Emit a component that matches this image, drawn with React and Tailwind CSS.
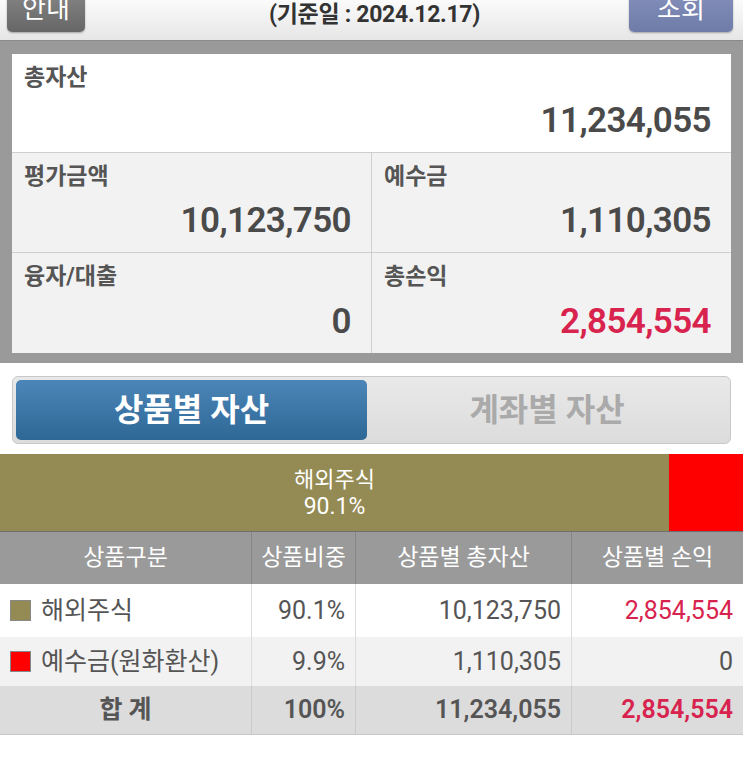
import React from "react";

const font = { fontFamily: "Roboto, 'Noto Sans CJK KR', sans-serif" };

function Cell({ label, value, red, className = "" }) {
  return (
    <div className={`flex flex-col px-[12px] pt-[9px] pb-[11px] ${className}`}>
      <div className="text-[23px] font-bold leading-[30px] text-[#555]">{label}</div>
      <div
        className={`mt-auto text-right text-[35px] font-semibold leading-[40px] tracking-[-0.6px] pr-[8px] ${
          red ? "text-[#d8234e]" : "text-[#4a4a4a]"
        }`}
      >
        {value}
      </div>
    </div>
  );
}

const rows = [
  { name: "해외주식", color: "bg-[#948a54]", ratio: "90.1%", total: "10,123,750", pl: "2,854,554", red: true, bg: "bg-white", h: "h-[53px]" },
  { name: "예수금(원화환산)", color: "bg-[#ff0000]", ratio: "9.9%", total: "1,110,305", pl: "0", red: false, bg: "bg-[#f2f2f2]", h: "h-[49px]" },
];

export default function App() {
  return (
    <div style={font} className="w-[743px] h-[773px] bg-white overflow-hidden">
      {/* top bar */}
      <div className="h-[40px] overflow-hidden bg-gradient-to-b from-[#fbfbfb] to-[#e6e6e6] grid grid-cols-[1fr_auto_1fr] items-start pl-[7px] pr-[10px]">
        <div className="justify-self-start -mt-[14px] h-[46px] w-[78px] rounded-[5px] bg-gradient-to-b from-[#8a8a8a] to-[#666] shadow-[0_1px_2px_rgba(0,0,0,0.3)] flex items-center justify-center text-white text-[26px] leading-none">
          안내
        </div>
        <div className="pt-[1px] pl-[9px] text-[23px] font-bold text-[#333] leading-[28px] tracking-[-0.3px]">(기준일 : 2024.12.17)</div>
        <div className="justify-self-end -mt-[14px] h-[46px] w-[104px] rounded-[5px] bg-gradient-to-b from-[#8793bd] to-[#6f7ca8] shadow-[0_1px_2px_rgba(0,0,0,0.3)] flex items-center justify-center text-white text-[26px] leading-none">
          조회
        </div>
      </div>

      {/* summary frame */}
      <div className="bg-[#9a9a9a] pt-[13px] pb-[10px] px-[12px] border-t border-[#8a8a8a]">
        <div className="bg-white">
          <Cell label="총자산" value="11,234,055" className="h-[99px] border-b border-[#cfcfcf]" />
          <div className="grid grid-cols-[360px_1fr] bg-[#f2f2f2]">
            <Cell label="평가금액" value="10,123,750" className="h-[100px] border-r border-b border-[#cfcfcf]" />
            <Cell label="예수금" value="1,110,305" className="h-[100px] border-b border-[#cfcfcf]" />
            <Cell label="융자/대출" value="0" className="h-[100px] border-r border-[#cfcfcf]" />
            <Cell label="총손익" value="2,854,554" red className="h-[100px]" />
          </div>
        </div>
      </div>

      {/* tabs */}
      <div className="px-[12px] pt-[13px] pb-[10px]">
        <div className="h-[68px] rounded-[6px] border border-[#c8c8c8] bg-gradient-to-b from-[#e9e9e9] to-[#dcdcdc] p-[3px] flex">
          <div className="w-[351px] rounded-[5px] bg-gradient-to-b from-[#4c86b8] to-[#2e6896] flex items-center justify-center text-white text-[32px] font-semibold">
            상품별 자산
          </div>
          <div className="flex-1 flex items-center justify-center text-[#aaa] text-[32px] font-semibold">
            계좌별 자산
          </div>
        </div>
      </div>

      {/* ratio bar */}
      <div className="h-[78px] flex border-b border-[#6e6e6e]">
        <div className="w-[669px] bg-[#948a54] flex flex-col items-center justify-center text-white leading-[27px]">
          <span className="text-[22px]">해외주식</span>
          <span className="text-[23px]">90.1%</span>
        </div>
        <div className="flex-1 bg-[#ff0000]" />
      </div>

      {/* table */}
      <div>
        <div className="grid grid-cols-[252px_104px_216px_1fr] h-[52px] bg-[#9a9a9a] text-white text-[23px]">
          <div className="flex items-center justify-center border-r border-[#858585]">상품구분</div>
          <div className="flex items-center justify-center border-r border-[#858585]">상품비중</div>
          <div className="flex items-center justify-center border-r border-[#858585]">상품별 총자산</div>
          <div className="flex items-center justify-center">상품별 손익</div>
        </div>
        {rows.map((r) => (
          <div key={r.name} className={`grid grid-cols-[252px_104px_216px_1fr] ${r.h} ${r.bg} text-[25px] text-[#555]`}>
            <div className="flex items-center gap-[10px] pl-[10px] border-r border-[#dcdcdc]">
              <span className={`w-[21px] h-[21px] shrink-0 ${r.color} border border-[#888]`} />
              <span className="whitespace-nowrap">{r.name}</span>
            </div>
            <div className="flex items-center justify-end pr-[10px] border-r border-[#dcdcdc]">{r.ratio}</div>
            <div className="flex items-center justify-end pr-[10px] border-r border-[#dcdcdc]">{r.total}</div>
            <div className={`flex items-center justify-end pr-[10px] ${r.red ? "text-[#d8234e]" : ""}`}>{r.pl}</div>
          </div>
        ))}
        <div className="grid grid-cols-[252px_104px_216px_1fr] h-[49px] bg-[#dcdcdc] text-[25px] font-semibold text-[#555] border-b border-[#c8c8c8]">
          <div className="flex items-center justify-center border-r border-[#cacaca]">합 계</div>
          <div className="flex items-center justify-end pr-[10px] border-r border-[#cacaca]">100%</div>
          <div className="flex items-center justify-end pr-[10px] border-r border-[#cacaca]">11,234,055</div>
          <div className="flex items-center justify-end pr-[10px] text-[#d8234e]">2,854,554</div>
        </div>
      </div>
    </div>
  );
}
